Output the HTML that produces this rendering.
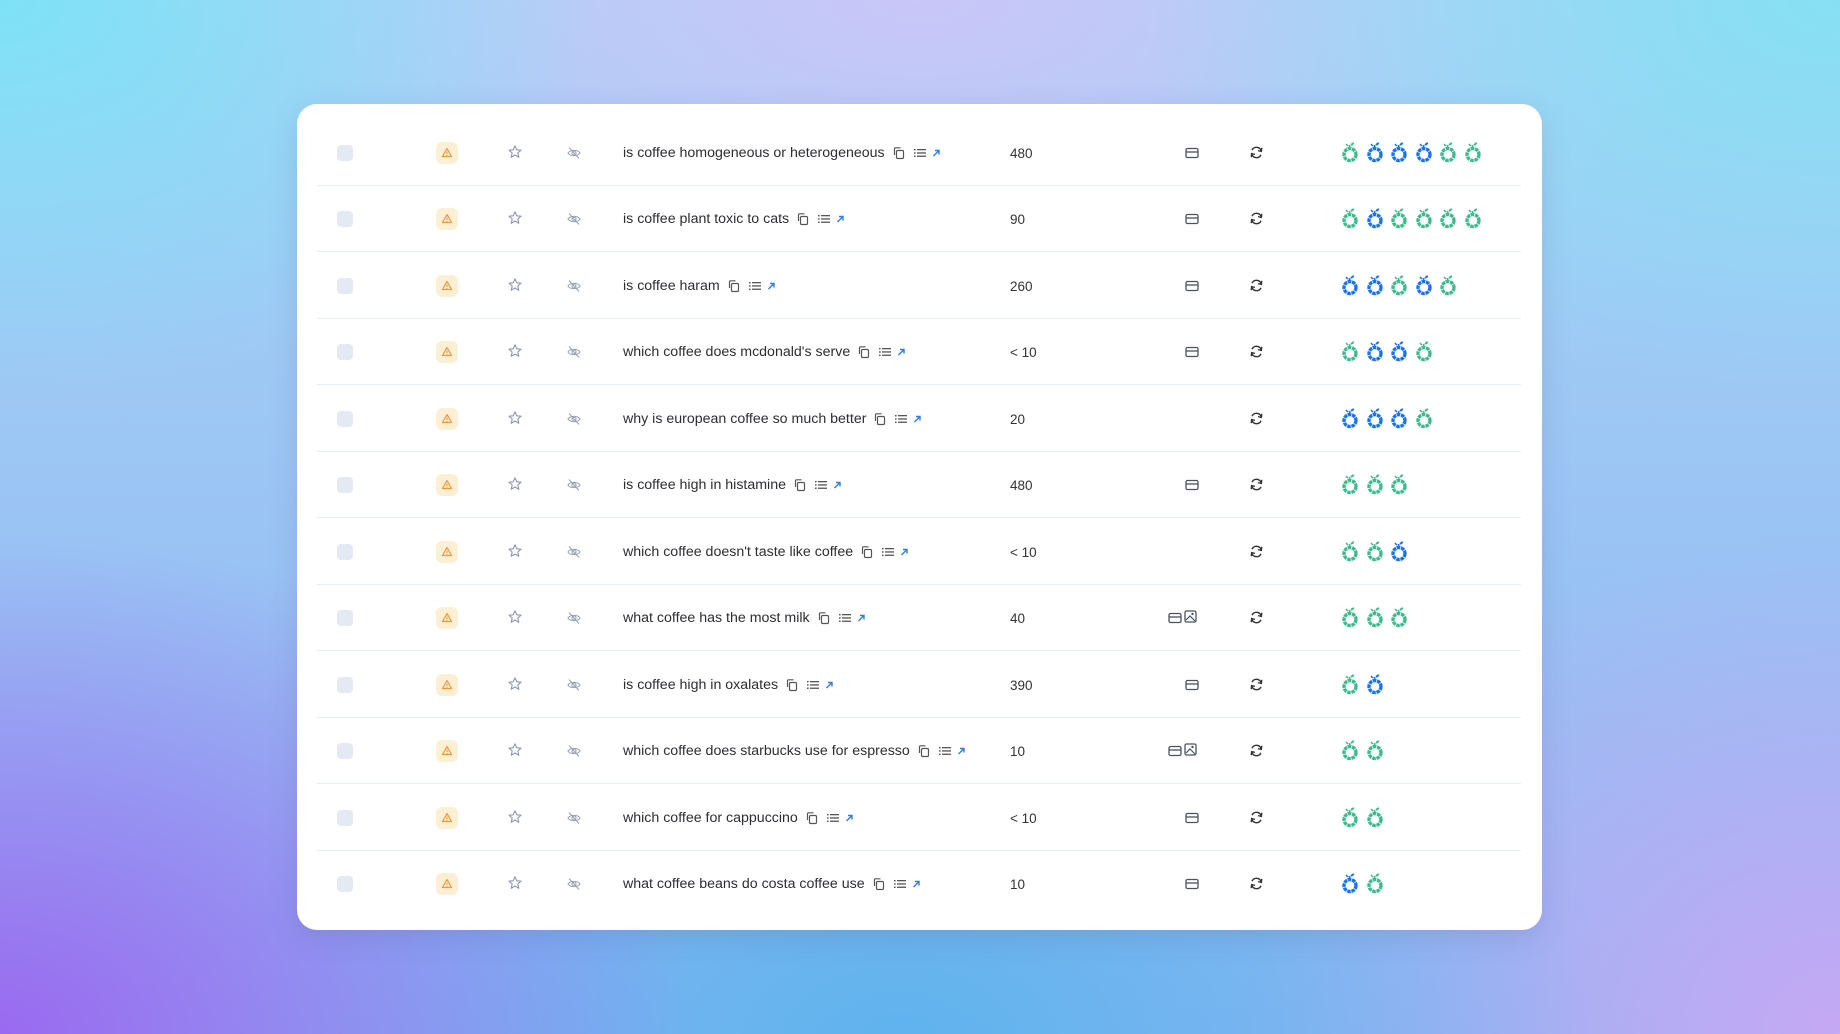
<!DOCTYPE html>
<html><head><meta charset="utf-8"><style>
*{margin:0;padding:0;box-sizing:border-box}
html,body{width:1840px;height:1034px;overflow:hidden}
body{font-family:"Liberation Sans",sans-serif;position:relative;
background:
radial-gradient(ellipse 700px 500px at 0px 1034px,#9a6af0 0%,rgba(154,106,240,0) 100%),
radial-gradient(ellipse 700px 420px at 900px 1034px,#5fb3ee 0%,rgba(95,179,238,0) 100%),
radial-gradient(ellipse 600px 500px at 1840px 1034px,#c6a8f4 0%,rgba(198,168,244,0) 100%),
radial-gradient(ellipse 600px 400px at 0px 0px,#7ee2f6 0%,rgba(126,226,246,0) 100%),
radial-gradient(ellipse 700px 400px at 1840px 0px,#86e0f4 0%,rgba(134,224,244,0) 100%),
radial-gradient(ellipse 800px 350px at 920px 0px,#c9c6f8 0%,rgba(201,198,248,0) 100%),
linear-gradient(180deg,#a8d2f6 0%,#8db6f2 100%);}
.card{position:absolute;left:297px;top:104px;width:1245px;height:826px;background:#fff;border-radius:20px;box-shadow:0 8px 30px rgba(60,60,120,.15)}
.row{position:absolute;left:0;width:1245px;height:67px}
.row .ln{position:absolute;left:20px;right:21px;bottom:0;height:1px;background:#e8eef6}
.cb{position:absolute;left:40px;top:26px;width:16px;height:16px;border-radius:4px;background:#e4eaf4}
.warn{position:absolute;left:139px;top:23px;width:22px;height:22px;border-radius:6px;background:#fdefd4}
.ic{position:absolute}
.txt{position:absolute;left:326px;top:26px;font-size:14.2px;color:#2d2d33;white-space:nowrap;display:flex;align-items:center;gap:0}
.num{position:absolute;left:713px;top:27px;font-size:13.5px;color:#333}
.apples{position:absolute;left:1045px;top:20px;display:flex;gap:8.6px}
</style></head><body>
<div class="card" id="c"></div>
<svg width="0" height="0" style="position:absolute">
<defs>
<symbol id="ap" viewBox="0 0 16 24"><circle cx="8" cy="15.5" r="6" fill="none" stroke="currentColor" stroke-width="3.4" stroke-dasharray="3.6 0.7"/><path d="M8 9 L7.3 6" stroke="currentColor" stroke-width="1.6" fill="none"/><path d="M8.4 6.5 C8.8 4 10.8 3.3 12.3 3.6 C12 5.8 10.2 6.8 8.4 6.5Z" fill="currentColor"/><path d="M5.8 7 L4 5" stroke="currentColor" stroke-width="1.5"/></symbol>
</defs></svg>
<script>
const rows=[
["is coffee homogeneous or heterogeneous","480",1,"gbbbgg"],
["is coffee plant toxic to cats","90",1,"gbgggg"],
["is coffee haram","260",1,"bbgbg"],
["which coffee does mcdonald's serve","< 10",1,"gbbg"],
["why is european coffee so much better","20",0,"bbbg"],
["is coffee high in histamine","480",1,"ggg"],
["which coffee doesn't taste like coffee","< 10",0,"ggb"],
["what coffee has the most milk","40",2,"ggg"],
["is coffee high in oxalates","390",1,"gb"],
["which coffee does starbucks use for espresso","10",2,"gg"],
["which coffee for cappuccino","< 10",1,"gg"],
["what coffee beans do costa coffee use","10",1,"bg"]];
const cardI='<svg width="14" height="12" viewBox="0 0 14 12"><rect x="1" y="1.5" width="12" height="9" rx="1.5" fill="none" stroke="#4a5160" stroke-width="1.3"/><line x1="1" y1="5" x2="13" y2="5" stroke="#4a5160" stroke-width="1.3"/></svg>';
const imgI='<svg width="13" height="13" viewBox="0 0 13 13"><rect x="1" y="1" width="11" height="11" rx="1.5" fill="none" stroke="#4a5160" stroke-width="1.3"/><path d="M2 10 L6 6 L11 11" fill="none" stroke="#4a5160" stroke-width="1.2"/><circle cx="8.5" cy="4" r="1.2" fill="#4a5160"/></svg>';
let h='';
rows.forEach((r,i)=>{
 const top=i*66.45+15;
 let ap='';for(const c of r[3])ap+=`<svg width="16" height="24" style="color:${c=='g'?'#3dbb8a':'#1a73ee'}"><use href="#ap"/></svg>`;
 let ci='';
 if(r[2]==1)ci=`<div class="ic" style="left:888px;top:27px">${cardI}</div>`;
 if(r[2]==2)ci=`<div class="ic" style="left:871px;top:27px">${cardI}</div><div class="ic" style="left:887px;top:26px">${imgI}</div>`;
 h+=`<div class="row" style="top:${top}px">
 <div class="cb"></div>
 <div class="warn"><svg width="22" height="22" viewBox="0 0 22 22"><path d="M11 6.5 L15.5 14.5 H6.5 Z" fill="none" stroke="#f0973a" stroke-width="1.2" stroke-linejoin="round"/><line x1="11" y1="9.5" x2="11" y2="12" stroke="#f0973a" stroke-width="1.1"/><circle cx="11" cy="13.3" r=".6" fill="#f0973a"/></svg></div>
 <div class="ic" style="left:210px;top:25px"><svg width="16" height="16" viewBox="0 0 16 16"><path d="M8 1.8 L9.8 5.8 L14 6.2 L10.8 9 L11.8 13.3 L8 11 L4.2 13.3 L5.2 9 L2 6.2 L6.2 5.8 Z" fill="none" stroke="#8a95b5" stroke-width="1.1" stroke-linejoin="round"/></svg></div>
 <div class="ic" style="left:269px;top:26px"><svg width="16" height="16" viewBox="0 0 16 16"><path d="M2 8 C4 4.5 12 4.5 14 8 C12 11.5 4 11.5 2 8Z" fill="none" stroke="#9aa3b8" stroke-width="1.1"/><circle cx="8" cy="8" r="2" fill="none" stroke="#9aa3b8" stroke-width="1.1"/><line x1="3" y1="2.5" x2="13" y2="13.5" stroke="#9aa3b8" stroke-width="1.1"/></svg></div>
 <div class="txt">${r[0]}<svg style="margin-left:7px" width="14" height="14" viewBox="0 0 14 14"><rect x="4.5" y="4.5" width="7" height="8" rx="1.3" fill="none" stroke="#555" stroke-width="1.2"/><path d="M2.5 9 V2.8 A1 1 0 0 1 3.5 1.8 H8.5" fill="none" stroke="#555" stroke-width="1.2"/></svg><svg style="margin-left:8px" width="12" height="12" viewBox="0 0 12 12"><g fill="#555"><rect x="0" y="2" width="1.6" height="1.4"/><rect x="3" y="2" width="9" height="1.3"/><rect x="0" y="5.3" width="1.6" height="1.4"/><rect x="3" y="5.3" width="9" height="1.3"/><rect x="0" y="8.6" width="1.6" height="1.4"/><rect x="3" y="8.6" width="9" height="1.3"/></g></svg><svg style="margin-left:5px" width="10" height="10" viewBox="0 0 10 10"><path d="M2.5 8 L8 2.5 M4 2.5 H8 V6.5" fill="none" stroke="#2f7be8" stroke-width="1.4"/></svg></div>
 <div class="num">${r[1].replace('<','&lt;')}</div>
 ${ci}
 <div class="ic" style="left:952px;top:26px"><svg width="15" height="15" viewBox="0 0 16 16"><path d="M13 6.5 A5.2 5.2 0 0 0 3.2 5.5" fill="none" stroke="#333" stroke-width="1.5"/><path d="M13.6 3 L13.2 6.8 L9.6 6" fill="none" stroke="#333" stroke-width="1.5"/><path d="M3 9.5 A5.2 5.2 0 0 0 12.8 10.5" fill="none" stroke="#333" stroke-width="1.5"/><path d="M2.4 13 L2.8 9.2 L6.4 10" fill="none" stroke="#333" stroke-width="1.5"/></svg></div>
 <div class="apples">${ap}</div>
 ${i<11?'<div class="ln"></div>':''}
 </div>`;
});
document.getElementById('c').innerHTML=h;
</script>
</body></html>
